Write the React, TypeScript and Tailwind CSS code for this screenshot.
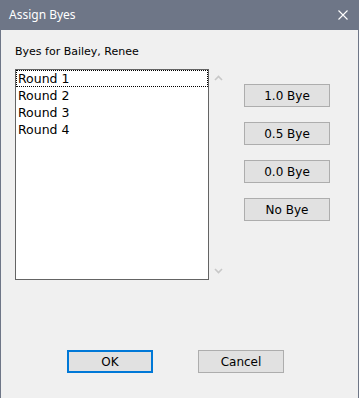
import React from "react"

const rounds = ["Round 1", "Round 2", "Round 3", "Round 4"]
const byeOptions = ["1.0 Bye", "0.5 Bye", "0.0 Bye", "No Bye"]

function WinButton({ label, focused = false }: { label: string; focused?: boolean }) {
  return (
    <button
      className={
        "w-[86px] h-[23px] bg-[#e1e1e1] text-[12px] text-black flex items-center justify-center " +
        (focused ? "border-2 border-[#0078d7]" : "border border-[#adadad]")
      }
    >
      {label}
    </button>
  )
}

function Chevron({ up }: { up?: boolean }) {
  return (
    <svg width="9" height="6" viewBox="0 0 9 6" className="block">
      <polyline
        points={up ? "1,5 4.5,1.5 8,5" : "1,1 4.5,4.5 8,1"}
        fill="none"
        stroke="#c8c8c8"
        strokeWidth="1.6"
      />
    </svg>
  )
}

export default function App() {
  return (
    <div
      className="w-[359px] h-[398px] flex flex-col bg-[#f0f0f0] border-x border-[#6e7687]"
      style={{ fontFamily: "'DejaVu Sans', 'Liberation Sans', sans-serif" }}
    >
      {/* title bar */}
      <div className="h-[30px] shrink-0 bg-[#6e7687] flex items-center justify-between pl-[8px] pr-[10px]">
        <span className="text-white text-[12px]" style={{ fontFamily: "'Noto Sans', 'Open Sans', sans-serif" }}>
          Assign Byes
        </span>
        <svg width="10" height="10" viewBox="0 0 10 10">
          <path d="M0.5 0.5 L9.5 9.5 M9.5 0.5 L0.5 9.5" stroke="#fff" strokeWidth="1.1" />
        </svg>
      </div>

      {/* body */}
      <div className="flex-1 pl-[14px] pt-[14px]">
        <div className="text-[11px] leading-[16px] text-black">Byes for Bailey, Renee</div>

        <div className="flex mt-[9px]">
          {/* list box */}
          <div className="w-[194px] h-[211px] border border-[#646464] bg-white">
            {rounds.map((r, i) => (
              <div
                key={r}
                className={
                  "h-[17px] pl-[1px] text-[12.5px] leading-[16px] text-black " +
                  (i === 0 ? "border border-dotted border-black" : "border border-transparent")
                }
              >
                {r}
              </div>
            ))}
          </div>

          {/* scroll arrows */}
          <div className="w-[18px] h-[211px] flex flex-col items-center justify-between py-[6px]">
            <Chevron up />
            <Chevron />
          </div>

          {/* bye buttons */}
          <div className="ml-[17px] pt-[15px] flex flex-col gap-[15px]">
            {byeOptions.map((b) => (
              <WinButton key={b} label={b} />
            ))}
          </div>
        </div>

        <div className="flex mt-[70px] pl-[52px] gap-[45px]">
          <WinButton label="OK" focused />
          <WinButton label="Cancel" />
        </div>
      </div>
    </div>
  )
}
